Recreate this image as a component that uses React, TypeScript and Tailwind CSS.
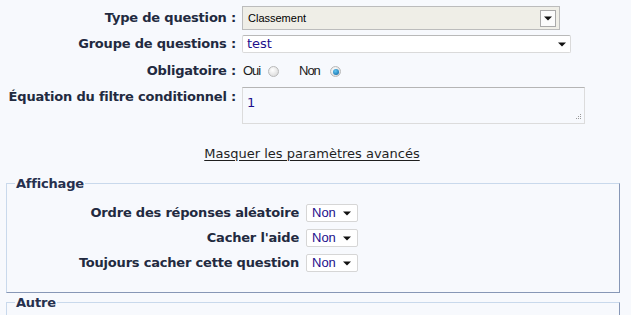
const labelFont = "font-['DejaVu_Sans','Verdana',sans-serif]";

function Arrow() {
  return (
    <svg width="8" height="5" viewBox="0 0 8 5">
      <path d="M0 0.5 H8 L4 4.5 Z" fill="#111" />
    </svg>
  );
}

function Radio({ checked }: { checked?: boolean }) {
  return (
    <span className="inline-flex h-[11px] w-[11px] items-center justify-center rounded-full border border-[#b9b9b9] bg-[radial-gradient(circle_at_40%_35%,#ffffff,#d4d4d4)]">
      {checked && (
        <span className="h-[6px] w-[6px] rounded-full bg-[radial-gradient(circle_at_40%_35%,#5fc6f2,#0a5f9e)]" />
      )}
    </span>
  );
}

function SmallSelect() {
  return (
    <div className="flex h-[18px] w-[52px] items-center justify-between rounded-[2px] border border-[#d6d6d6] bg-white pl-[5px] pr-[6px]">
      <span className="font-['Liberation_Sans',Arial,sans-serif] text-[13px] text-[#1d0f8c]">Non</span>
      <Arrow />
    </div>
  );
}

function TopRow({ label, children, className = "" }: { label: string; children: React.ReactNode; className?: string }) {
  return (
    <div className={`flex ${className}`}>
      <div className={`w-[237px] shrink-0 pr-[1px] text-right text-[13px] font-bold tracking-[-0.2px] text-[#222a40] ${labelFont}`}>
        {label}
      </div>
      <div className="ml-[5px]">{children}</div>
    </div>
  );
}

export default function App() {
  return (
    <div className="h-[315px] w-[631px] overflow-hidden bg-[#f7f9fd]">
      {/* Question settings */}
      <div className="pt-[6px]">
        <TopRow label="Type de question :" className="items-center h-[24px]">
          <div className="flex h-[24px] w-[318px] items-center justify-between border border-[#bcbcbc] bg-[#efeee7] pl-[5px] pr-[3px]">
            <span className="font-['Liberation_Sans',Arial,sans-serif] text-[11px] text-black">Classement</span>
            <div className="flex h-[17px] w-[16px] items-center justify-center border border-[#a9a9a9] bg-[#fbfbfb]">
              <Arrow />
            </div>
          </div>
        </TopRow>

        <TopRow label="Groupe de questions :" className="mt-[5px] items-center h-[18px]">
          <div className="flex h-[18px] w-[329px] items-center justify-between rounded-[2px] border border-[#dadada] border-t-[#b9b9b9] bg-white pl-[4px] pr-[4px]">
            <span className={`text-[13px] text-[#1d0f8c] ${labelFont}`}>test</span>
            <Arrow />
          </div>
        </TopRow>

        <TopRow label="Obligatoire :" className="mt-[9px] items-center h-[18px]">
          <div className="flex items-center font-['Liberation_Sans',Arial,sans-serif] text-[13px] tracking-[-1px] text-[#1b1b1b]">
            <span className="w-[21px] pl-[1px]">Oui</span>
            <span className="ml-[5px] mt-[1px] flex"><Radio /></span>
            <span className="ml-[20px] w-[22px]">Non</span>
            <span className="ml-[9px] mt-[1px] flex"><Radio checked /></span>
          </div>
        </TopRow>

        <TopRow label="Équation du filtre conditionnel :" className="mt-[7px]">
          <div className="relative h-[37px] w-[343px] border border-[#dcdcdc] border-t-[#b5b5b5] bg-[#f7f9fd] pl-[4px] pt-[1px]">
            <span className={`text-[13px] text-[#1d0f8c] ${labelFont}`}>1</span>
            <svg className="absolute bottom-[2px] right-[2px]" width="7" height="7" viewBox="0 0 7 7">
              <rect x="5" y="0" width="1" height="1" fill="#9a9a9a" />
              <rect x="3" y="2" width="1" height="1" fill="#9a9a9a" />
              <rect x="5" y="2" width="1" height="1" fill="#9a9a9a" />
              <rect x="1" y="4" width="1" height="1" fill="#9a9a9a" />
              <rect x="3" y="4" width="1" height="1" fill="#9a9a9a" />
              <rect x="5" y="4" width="1" height="1" fill="#9a9a9a" />
            </svg>
          </div>
        </TopRow>
      </div>

      {/* Advanced toggle */}
      <div className="mt-[20px] flex justify-center pr-[7px]">
        <a className={`text-[13px] text-[#1f1f1f] underline underline-offset-2 ${labelFont}`} href="#">
          Masquer les paramètres avancés
        </a>
      </div>

      {/* Affichage */}
      <fieldset className="ml-[6px] mt-[10px] w-[614px] border border-[#c9d9ec] border-b-[#8797b6] border-r-[#8797b6] px-[8px] pb-[20px] pt-[11px]">
        <legend className={`px-[1px] text-[13px] font-bold tracking-[-0.2px] text-[#26304e] ${labelFont}`}>Affichage</legend>
        <div className="flex flex-col gap-[7px]">
          {["Ordre des réponses aléatoire", "Cacher l'aide", "Toujours cacher cette question"].map((l) => (
            <div key={l} className="flex h-[18px] items-center">
              <div className={`w-[284px] text-right text-[13px] font-bold tracking-[-0.2px] text-[#222a40] ${labelFont}`}>{l}</div>
              <div className="ml-[7px]">
                <SmallSelect />
              </div>
            </div>
          ))}
        </div>
      </fieldset>

      {/* Autre */}
      <fieldset className="ml-[6px] h-[40px] w-[614px] border border-[#c9d9ec] border-r-[#8797b6] px-[8px]">
        <legend className={`px-[1px] text-[13px] font-bold tracking-[-0.2px] text-[#26304e] ${labelFont}`}>Autre</legend>
      </fieldset>
    </div>
  );
}
